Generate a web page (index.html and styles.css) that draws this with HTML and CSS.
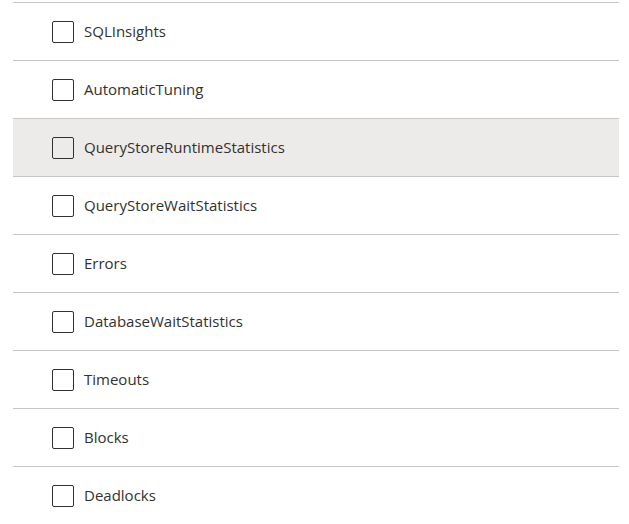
FILE: index.html
```html
<!DOCTYPE html>
<html lang="en">
<head>
    <meta charset="UTF-8">
    <meta name="viewport" content="width=device-width, initial-scale=1.0">
    <title>Diagnostic categories</title>
    <link rel="stylesheet" href="styles.css">
</head>
<body>
    <div class="list">
        <label class="row"><span class="box"></span><span class="name">SQLInsights</span></label>
        <label class="row"><span class="box"></span><span class="name">AutomaticTuning</span></label>
        <label class="row hover"><span class="box"></span><span class="name">QueryStoreRuntimeStatistics</span></label>
        <label class="row"><span class="box"></span><span class="name">QueryStoreWaitStatistics</span></label>
        <label class="row"><span class="box"></span><span class="name">Errors</span></label>
        <label class="row"><span class="box"></span><span class="name">DatabaseWaitStatistics</span></label>
        <label class="row"><span class="box"></span><span class="name">Timeouts</span></label>
        <label class="row"><span class="box"></span><span class="name">Blocks</span></label>
        <label class="row"><span class="box"></span><span class="name">Deadlocks</span></label>
    </div>
</body>
</html>
```

FILE: styles.css
```css
body {
    margin: 0;
    padding: 0;
    background-color: #fff;
    font-family: "Open Sans", sans-serif;
    color: #323130;
}

.list {
    width: 606px;
    margin-left: 13px;
    padding-top: 2px;
}

.row {
    display: flex;
    align-items: center;
    height: 57px;
    border-top: 1px solid #c8c6c4;
    padding-left: 39px;
    cursor: pointer;
}

.row.hover {
    background-color: #edebe9;
}

.box {
    width: 20px;
    height: 20px;
    border: 1px solid #323130;
    border-radius: 2px;
    margin-right: 10px;
    flex-shrink: 0;
}

.name {
    font-size: 15px;
    margin-bottom: 2px;
}
```
